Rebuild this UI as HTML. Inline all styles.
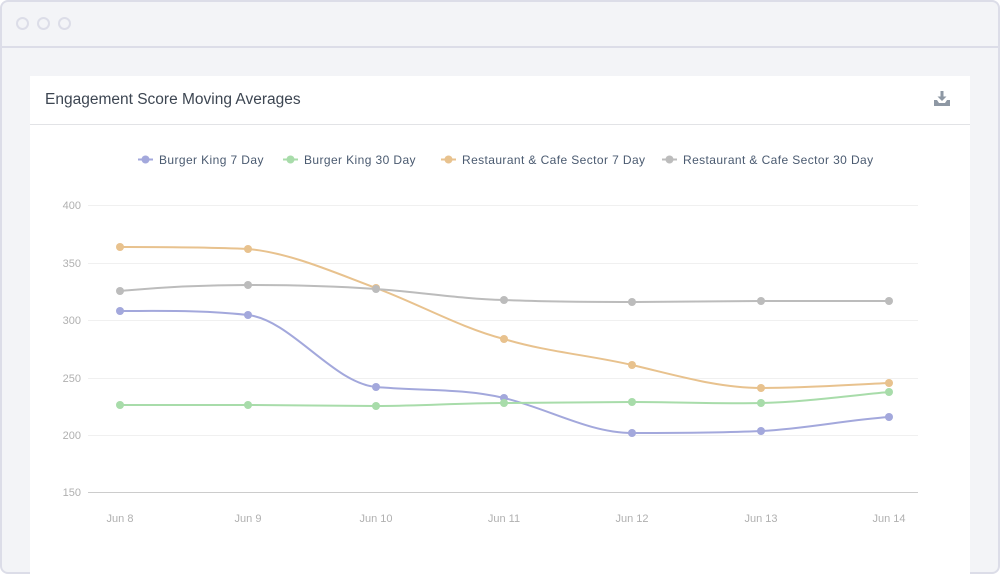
<!DOCTYPE html>
<html><head><style>
body{margin:0;width:1000px;height:560px;overflow:hidden;background:#fff;font-family:"Liberation Sans",sans-serif}
.frame{position:absolute;left:0;top:0;width:996px;height:570px;border:2px solid #dcdde8;border-radius:8px;background:#f3f4f7}
.bar{position:absolute;left:0;top:0;width:996px;height:44px;border-bottom:2px solid #dcdde8}
.dot{position:absolute;top:15px;width:9px;height:9px;border:2px solid #dcdde8;border-radius:50%}
.card{position:absolute;left:30px;top:76px;width:940px;height:500px;background:#fff}
.hdr{height:48px;border-bottom:1px solid #e2e3e6;position:relative}
.hdr span{position:absolute;left:15px;top:15px;font-size:15.5px;color:#3d4652}
</style></head><body>
<div class="frame"><div class="bar">
<div class="dot" style="left:14px"></div><div class="dot" style="left:35px"></div><div class="dot" style="left:56px"></div></div></div>
<div class="card"><div class="hdr"><span>Engagement Score Moving Averages</span>
<svg style="position:absolute;left:904px;top:15px" width="16" height="16" viewBox="0 0 16 16"><rect x="6.5" y="0" width="3" height="6" fill="#8e98a4"/><path d="M3.5 5.5h9L8 10z" fill="#8e98a4"/><path d="M0 9h3l2 3h6l2-3h3v6H0z" fill="#8e98a4"/></svg></div></div>
<svg style="position:absolute;left:0;top:0" width="1000" height="560" font-family="Liberation Sans,sans-serif">
<g stroke="#f0f0f0" stroke-width="1">
<line x1="88" x2="918" y1="205.5" y2="205.5"/><line x1="88" x2="918" y1="263.5" y2="263.5"/><line x1="88" x2="918" y1="320.5" y2="320.5"/><line x1="88" x2="918" y1="378.5" y2="378.5"/><line x1="88" x2="918" y1="435.5" y2="435.5"/></g>
<line x1="88" x2="918" y1="492.5" y2="492.5" stroke="#ccc"/>
<g font-size="11" fill="#b0b0b0" text-anchor="end">
<text x="81" y="209">400</text><text x="81" y="267">350</text><text x="81" y="324">300</text><text x="81" y="382">250</text><text x="81" y="439">200</text><text x="81" y="496">150</text></g>
<g font-size="11" fill="#b0b0b0" text-anchor="middle">
<text x="120" y="522">Jun 8</text><text x="248" y="522">Jun 9</text><text x="376" y="522">Jun 10</text><text x="504" y="522">Jun 11</text><text x="632" y="522">Jun 12</text><text x="761" y="522">Jun 13</text><text x="889" y="522">Jun 14</text></g>
<g fill="none" stroke-width="2">
<path stroke="#a3a8dc" d="M120 311C163 311 205 310 248 315C291 320 333 383 376 387C419 391 461 388 504 398C547 408 589 433 632 433C675 433 718 433 761 431C804 429 846 420 889 417"/>
<path stroke="#a8dcaa" d="M120 405C163 405 205 405 248 405C291 405 333 406 376 406C419 406 461 403 504 403C547 403 589 402 632 402C675 402 718 404 761 403C804 402 846 396 889 392"/>
<path stroke="#e8c28e" d="M120 247C163 247 205 247 248 249C291 253 333 272 376 288C419 304 461 328 504 339C547 352 589 355 632 365C675 375 718 388 761 388C804 388 846 385 889 383"/>
<path stroke="#bcbcbc" d="M120 291C163 287 205 285 248 285C291 285 333 286 376 289C419 292 461 299 504 300C547 302 589 302 632 302C675 302 718 301 761 301C804 301 846 301 889 301"/>
</g>
<g fill="#a3a8dc"><circle cx="120" cy="311" r="4"/><circle cx="248" cy="315" r="4"/><circle cx="376" cy="387" r="4"/><circle cx="504" cy="398" r="4"/><circle cx="632" cy="433" r="4"/><circle cx="761" cy="431" r="4"/><circle cx="889" cy="417" r="4"/></g>
<g fill="#a8dcaa"><circle cx="120" cy="405" r="4"/><circle cx="248" cy="405" r="4"/><circle cx="376" cy="406" r="4"/><circle cx="504" cy="403" r="4"/><circle cx="632" cy="402" r="4"/><circle cx="761" cy="403" r="4"/><circle cx="889" cy="392" r="4"/></g>
<g fill="#e8c28e"><circle cx="120" cy="247" r="4"/><circle cx="248" cy="249" r="4"/><circle cx="376" cy="288" r="4"/><circle cx="504" cy="339" r="4"/><circle cx="632" cy="365" r="4"/><circle cx="761" cy="388" r="4"/><circle cx="889" cy="383" r="4"/></g>
<g fill="#bcbcbc"><circle cx="120" cy="291" r="4"/><circle cx="248" cy="285" r="4"/><circle cx="376" cy="289" r="4"/><circle cx="504" cy="300" r="4"/><circle cx="632" cy="302" r="4"/><circle cx="761" cy="301" r="4"/><circle cx="889" cy="301" r="4"/></g>
<g font-size="12" fill="#4a5a70" letter-spacing="0.4">
<line x1="138" x2="153" y1="159.5" y2="159.5" stroke="#a3a8dc" stroke-width="2"/><circle cx="145.5" cy="159.5" r="4" fill="#a3a8dc"/><text x="159" y="164">Burger King 7 Day</text>
<line x1="283" x2="298" y1="159.5" y2="159.5" stroke="#a8dcaa" stroke-width="2"/><circle cx="290.5" cy="159.5" r="4" fill="#a8dcaa"/><text x="304" y="164">Burger King 30 Day</text>
<line x1="441" x2="456" y1="159.5" y2="159.5" stroke="#e8c28e" stroke-width="2"/><circle cx="448.5" cy="159.5" r="4" fill="#e8c28e"/><text x="462" y="164">Restaurant &amp; Cafe Sector 7 Day</text>
<line x1="662" x2="677" y1="159.5" y2="159.5" stroke="#bcbcbc" stroke-width="2"/><circle cx="669.5" cy="159.5" r="4" fill="#bcbcbc"/><text x="683" y="164">Restaurant &amp; Cafe Sector 30 Day</text>
</g>
</svg>
</body></html>
